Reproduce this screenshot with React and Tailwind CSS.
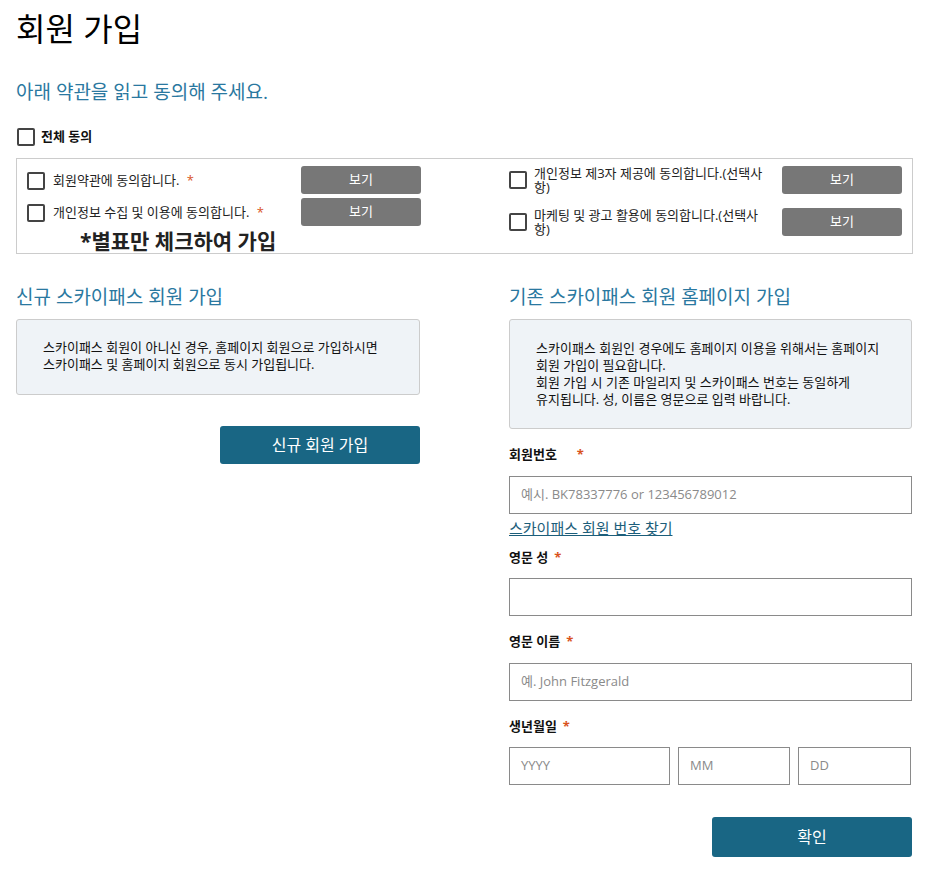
const FONT = { fontFamily: '"Open Sans", "Noto Sans CJK KR", sans-serif' }

function Box() {
  return <span className="inline-block h-[18px] w-[18px] shrink-0 rounded-[2px] border-2 border-[#444] bg-white" />
}

function Star() {
  return <span className="text-[#d9531e]">*</span>
}

function ViewButton() {
  return (
    <button type="button" className="h-[28px] w-[120px] shrink-0 rounded-[3px] bg-[#777777] text-[13px] text-white">
      보기
    </button>
  )
}

function Label({ children, gap = 'ml-1.5' }) {
  return (
    <p className="text-[13px] font-bold leading-[20px] text-[#111]">
      {children}
      <span className={`${gap} text-[#d9531e]`}>*</span>
    </p>
  )
}

function Field({ placeholder = '', className = '' }) {
  return (
    <div className={`flex h-[38px] items-center border border-[#8a8a8a] bg-white px-[11px] text-[13px] text-[#8a8a8a] ${className}`}>
      {placeholder}
    </div>
  )
}

export default function App() {
  return (
    <div className="min-h-[882px] w-[928px] bg-white pl-4 pr-4 text-[#222]" style={FONT}>
      <h1 className="pt-[7px] text-[32px] leading-[44px] text-black">회원 가입</h1>
      <p className="mt-[28px] text-[19px] leading-[26px] text-[#2a78a0]">아래 약관을 읽고 동의해 주세요.</p>

      <div className="mt-[22px] flex items-center gap-[6px] pl-[1px]">
        <Box />
        <span className="text-[13px] font-bold text-[#111]">전체 동의</span>
      </div>

      <div className="mt-[11px] flex h-[96px] w-[897px] border border-[#cccccc]">
        <div className="flex w-[448px] flex-col pl-[10px] pt-[7px]">
          <div className="flex h-[28px] items-center">
            <div className="flex w-[274px] items-center gap-[8px] pt-[3px]">
              <Box />
              <span className="text-[13px]">회원약관에 동의합니다. <span className="ml-1"><Star /></span></span>
            </div>
            <ViewButton />
          </div>
          <div className="mt-[4px] flex h-[28px] items-center">
            <div className="flex w-[274px] items-center gap-[8px] pt-[3px]">
              <Box />
              <span className="text-[13px]">개인정보 수집 및 이용에 동의합니다. <span className="ml-1"><Star /></span></span>
            </div>
            <ViewButton />
          </div>
          <p className="ml-[53px] mt-[3px] text-[21px] font-bold leading-[24px] text-[#222]">*별표만 체크하여 가입</p>
        </div>
        <div className="flex flex-1 flex-col pl-[44px] pt-[7px]">
          <div className="flex h-[28px] items-center">
            <div className="flex w-[273px] items-center gap-[7px]">
              <Box />
              <span className="w-[232px] text-[13px] leading-[14px]">개인정보 제3자 제공에 동의합니다.(선택사항)</span>
            </div>
            <ViewButton />
          </div>
          <div className="mt-[14px] flex h-[28px] items-center">
            <div className="flex w-[273px] items-center gap-[7px]">
              <Box />
              <span className="w-[232px] text-[13px] leading-[14px]">마케팅 및 광고 활용에 동의합니다.(선택사항)</span>
            </div>
            <ViewButton />
          </div>
        </div>
      </div>

      <div className="mt-[30px] flex">
        <div className="flex w-[404px] flex-col">
          <h2 className="text-[19px] leading-[26px] text-[#2a78a0]">신규 스카이패스 회원 가입</h2>
          <div className="mt-[9px] h-[76px] rounded-[3px] border border-[#cccccc] bg-[#eff3f7] pl-[26px] pt-[19px] text-[13px] leading-[17px] text-[#111]">
            스카이패스 회원이 아니신 경우, 홈페이지 회원으로 가입하시면<br />
            스카이패스 및 홈페이지 회원으로 동시 가입됩니다.
          </div>
          <button type="button" className="ml-auto mt-[31px] h-[38px] w-[200px] rounded-[3px] bg-[#196684] text-[16px] text-white">
            신규 회원 가입
          </button>
        </div>

        <div className="ml-[89px] flex w-[403px] flex-col">
          <h2 className="text-[19px] leading-[26px] text-[#2a78a0]">기존 스카이패스 회원 홈페이지 가입</h2>
          <div className="mt-[9px] h-[110px] rounded-[3px] border border-[#cccccc] bg-[#eff3f7] pl-[26px] pt-[20px] text-[13px] leading-[17px] text-[#111]">
            스카이패스 회원인 경우에도 홈페이지 이용을 위해서는 홈페이지<br />
            회원 가입이 필요합니다.<br />
            회원 가입 시 기존 마일리지 및 스카이패스 번호는 동일하게<br />
            유지됩니다. 성, 이름은 영문으로 입력 바랍니다.
          </div>

          <div className="mt-[15px]"><Label gap="ml-[20px]">회원번호</Label></div>
          <Field className="mt-[12px]" placeholder="예시. BK78337776 or 123456789012" />
          <a href="#" className="mt-[4px] w-fit text-[15px] leading-[20px] text-[#1c5e7a] underline">스카이패스 회원 번호 찾기</a>
          <div className="mt-[9px]"><Label>영문 성</Label></div>
          <Field className="mt-[11px]" />
          <div className="mt-[15px]"><Label>영문 이름</Label></div>
          <Field className="mt-[12px]" placeholder="예. John Fitzgerald" />
          <div className="mt-[15px]"><Label>생년월일</Label></div>
          <div className="mt-[11px] flex gap-[8px]">
            <Field className="w-[161px]" placeholder="YYYY" />
            <Field className="w-[112px]" placeholder="MM" />
            <Field className="w-[113px]" placeholder="DD" />
          </div>
          <button type="button" className="ml-auto mt-[32px] h-[40px] w-[200px] rounded-[3px] bg-[#196684] text-[16px] text-white">
            확인
          </button>
        </div>
      </div>
    </div>
  )
}
